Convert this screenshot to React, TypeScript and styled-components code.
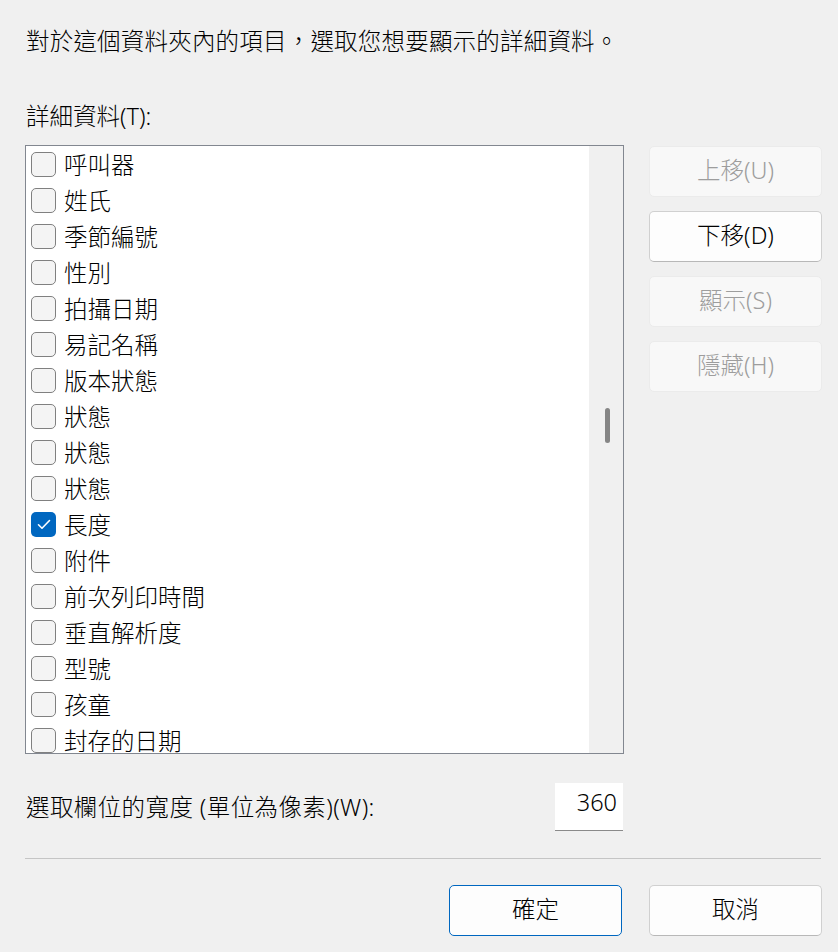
import React from "react";
import styled, { createGlobalStyle } from "styled-components";

const Global = createGlobalStyle`
  html, body { margin: 0; padding: 0; background: #f0f0f0; }
  body {
    font-family: "Noto Sans", "Noto Sans CJK TC", sans-serif;
    color: #000;
  }
  * { box-sizing: border-box; }
`;

const Dialog = styled.div`
  width: 838px;
  height: 952px;
  padding: 24px 16px 0 25px;
  display: flex;
  flex-direction: column;
  font-weight: 300;
`;

const Text = styled.div`
  font-size: 23.5px;
  line-height: 32px;
  padding-left: 1px;
  white-space: nowrap;
`;

const Intro = styled(Text)`
  font-family: "Noto Sans CJK TC", sans-serif;
  letter-spacing: 0.2px;
`;

const SectionLabel = styled(Text)`
  margin-top: 44px;
`;

const MainRow = styled.div`
  display: flex;
  margin-top: 13px;
  gap: 25px;
`;

const List = styled.div`
  width: 600px;
  height: 609px;
  border: 1px solid #828790;
  background: #fff;
  display: flex;
`;

const Items = styled.div`
  flex: 1;
  overflow: hidden;
`;

const Row = styled.div`
  height: 36px;
  display: flex;
  align-items: center;
  padding-left: 5px;
  gap: 8px;
  font-size: 23.5px;
  white-space: nowrap;
`;

const Box = styled.span<{ $checked?: boolean }>`
  width: 25px;
  height: 25px;
  flex: none;
  border-radius: 5px;
  border: ${(p) => (p.$checked ? "none" : "1.5px solid #808080")};
  background: ${(p) => (p.$checked ? "#0067c0" : "#f4f4f4")};
  display: flex;
  align-items: center;
  justify-content: center;
`;

const Track = styled.div`
  width: 34px;
  background: #f0f0f0;
  display: flex;
  justify-content: center;
`;

const Thumb = styled.div`
  width: 5px;
  height: 35px;
  margin-top: 262px;
  margin-left: 3px;
  border-radius: 3px;
  background: #858585;
`;

const SideButtons = styled.div`
  display: flex;
  flex-direction: column;
  gap: 14px;
  padding-top: 1px;
`;

const Button = styled.button<{ $disabled?: boolean; $primary?: boolean }>`
  width: 173px;
  height: 51px;
  border-radius: 5px;
  font-family: "Noto Sans", "Noto Sans CJK TC", sans-serif;
  font-weight: 300;
  font-size: 23.5px;
  line-height: 1;
  padding: 0 0 2px 0;
  cursor: default;
  color: ${(p) => (p.$disabled ? "#9d9d9d" : "#000")};
  background: ${(p) => (p.$disabled ? "#f8f8f8" : "#fdfdfd")};
  border: 1px solid
    ${(p) => (p.$primary ? "#0067c0" : p.$disabled ? "#ebebeb" : "#d0d0d0")};
  border-bottom-color: ${(p) =>
    p.$primary ? "#0067c0" : p.$disabled ? "#ebebeb" : "#b8b8b8"};
`;

const WidthRow = styled.div`
  display: flex;
  align-items: center;
  justify-content: space-between;
  width: 598px;
  margin-top: 29px;
`;

const WidthLabel = styled(Text)`
  letter-spacing: 0.4px;
`;

const NumberBox = styled.div`
  width: 68px;
  height: 48px;
  background: #fff;
  border-bottom: 1px solid #8a8a8a;
  font-size: 23.5px;
  line-height: 38px;
  text-align: right;
  padding-right: 6px;
`;

const Separator = styled.hr`
  margin: 27px 0 0 0;
  width: 796px;
  border: none;
  border-top: 1px solid #c5c5c5;
`;

const Footer = styled.div`
  display: flex;
  justify-content: flex-end;
  gap: 27px;
  margin-top: 26px;
`;

const Check = () => (
  <svg width="14" height="11" viewBox="0 0 14 11">
    <path d="M1.5 5.8 L5 9.2 L12.5 1.5" stroke="#fff" strokeWidth="1.6" fill="none" strokeLinecap="round" strokeLinejoin="round" />
  </svg>
);

const items: { label: string; checked?: boolean }[] = [
  { label: "呼叫器" },
  { label: "姓氏" },
  { label: "季節編號" },
  { label: "性別" },
  { label: "拍攝日期" },
  { label: "易記名稱" },
  { label: "版本狀態" },
  { label: "狀態" },
  { label: "狀態" },
  { label: "狀態" },
  { label: "長度", checked: true },
  { label: "附件" },
  { label: "前次列印時間" },
  { label: "垂直解析度" },
  { label: "型號" },
  { label: "孩童" },
  { label: "封存的日期" },
];

export default function App() {
  return (
    <>
      <Global />
      <Dialog lang="zh-Hant-TW">
        <Intro>對於這個資料夾內的項目，選取您想要顯示的詳細資料。</Intro>
        <SectionLabel>詳細資料(T):</SectionLabel>
        <MainRow>
          <List>
            <Items>
              {items.map((it, i) => (
                <Row key={i}>
                  <Box $checked={it.checked}>{it.checked && <Check />}</Box>
                  <span>{it.label}</span>
                </Row>
              ))}
            </Items>
            <Track>
              <Thumb />
            </Track>
          </List>
          <SideButtons>
            <Button $disabled>上移(U)</Button>
            <Button>下移(D)</Button>
            <Button $disabled>顯示(S)</Button>
            <Button $disabled>隱藏(H)</Button>
          </SideButtons>
        </MainRow>
        <WidthRow>
          <WidthLabel>選取欄位的寬度 (單位為像素)(W):</WidthLabel>
          <NumberBox>360</NumberBox>
        </WidthRow>
        <Separator />
        <Footer>
          <Button $primary>確定</Button>
          <Button>取消</Button>
        </Footer>
      </Dialog>
    </>
  );
}
